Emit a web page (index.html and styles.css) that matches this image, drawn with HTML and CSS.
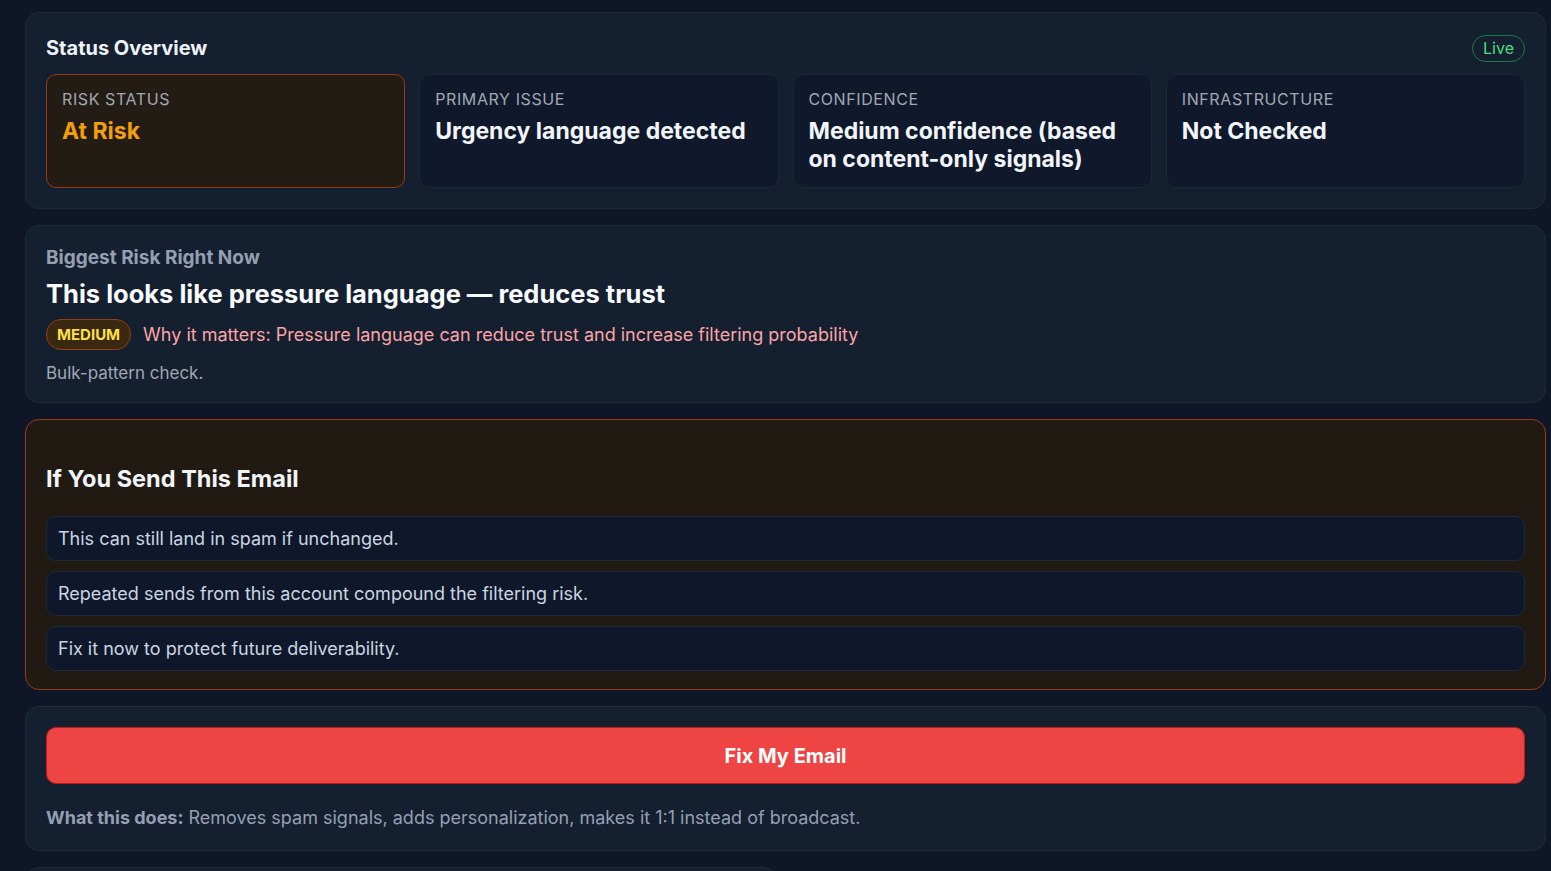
FILE: index.html
```html
<!doctype html>
<html>
<head>
    <title>Email check - result</title>
    <meta http-equiv="Content-Type" content="text/html; charset=utf-8" />
    <link rel="stylesheet" href="styles.css">
</head>
<body>
<div class="page">

<div class="card">
    <div class="card-head">
        <h2>Status Overview</h2>
        <span class="live">Live</span>
    </div>
    <div class="stats">
        <div class="stat stat-risk">
            <div class="stat-label">Risk Status</div>
            <div class="stat-value">At Risk</div>
        </div>
        <div class="stat">
            <div class="stat-label">Primary Issue</div>
            <div class="stat-value">Urgency language detected</div>
        </div>
        <div class="stat">
            <div class="stat-label">Confidence</div>
            <div class="stat-value">Medium confidence (based on content-only signals)</div>
        </div>
        <div class="stat">
            <div class="stat-label">Infrastructure</div>
            <div class="stat-value">Not Checked</div>
        </div>
    </div>
</div>

<div class="card card-risk">
    <div class="kicker">Biggest Risk Right Now</div>
    <h1>This looks like pressure language — reduces trust</h1>
    <div class="why">
        <span class="badge">MEDIUM</span>
        <span>Why it matters: Pressure language can reduce trust and increase filtering probability</span>
    </div>
    <div class="note">Bulk-pattern check.</div>
</div>

<div class="card card-warn">
    <h3>If You Send This Email</h3>
    <ul class="outcomes">
        <li>This can still land in spam if unchanged.</li>
        <li>Repeated sends from this account compound the filtering risk.</li>
        <li>Fix it now to protect future deliverability.</li>
    </ul>
</div>

<div class="card">
    <button class="fix">Fix My Email</button>
    <p class="does"><b>What this does:</b> Removes spam signals, adds personalization, makes it 1:1 instead of broadcast.</p>
</div>

<div class="bottom">
    <div class="card card-small"></div>
</div>

</div>
</body>
</html>
```

FILE: styles.css
```css
html, body    { margin:0; background-color:#0f1628; }
body          { font-family:Inter, "Noto Sans", sans-serif; color:#f1f5f9; }
.page         { padding:12px 5px 0 25px; display:flex; flex-direction:column; gap:16px; }

.card         { background-color:#141f30; border:1px solid #1f2b3d; border-radius:14px; padding:20px; }
.card-head    { display:flex; justify-content:space-between; align-items:center; height:30px; }
h2            { margin:0; font-size:20px; font-weight:700; color:#eef2f7; }
.live         { border:1px solid #15803d; color:#4ade80; border-radius:14px; padding:3px 10px; font-size:16px; line-height:19px; }

.stats        { display:grid; grid-template-columns:repeat(4, 1fr); gap:14px; margin-top:11px; }
.stat         { background-color:#0f192b; border:1px solid #1c2839; border-radius:10px; padding:14px 15px; min-height:84px; }
.stat-label   { font-size:16px; line-height:20px; text-transform:uppercase; letter-spacing:0.6px; color:#a1a8b3; }
.stat-value   { margin-top:8px; font-size:23px; line-height:28px; font-weight:700; color:#f1f5f9; }
.stat-risk    { background-color:#231c14; border-color:#9a3a12; }
.stat-risk .stat-value { color:#f59e0b; }

.card-risk    { padding:20px 20px 18px 20px; }
.kicker       { font-size:19px; line-height:24px; font-weight:700; color:#94a0b2; }
h1            { margin:8px 0 0 0; font-size:25.5px; line-height:32px; font-weight:700; color:#f8fafc; }
.why          { display:flex; align-items:center; gap:12px; margin-top:9px; font-size:18px; color:#fca5a5; }
.badge        { background-color:#3a2811; border:1px solid #92400e; color:#fde047; font-weight:700; font-size:15px; border-radius:15px; padding:0 10px; line-height:29px; }
.note         { margin-top:12px; font-size:17px; line-height:22px; color:#a1a8b3; }

.card-warn    { background-color:#201a13; border-color:#9a3a12; padding:20px 20px 18px 20px; }
h3            { margin:24px 0 0 0; font-size:23.5px; line-height:30px; font-weight:700; color:#f1f5f9; }
.outcomes     { list-style:none; margin:22px 0 0 0; padding:0; display:flex; flex-direction:column; gap:10px; }
.outcomes li  { background-color:#0f182a; border:1px solid #1e2a3c; border-radius:10px; padding:10px 11px; font-size:18px; line-height:23px; color:#cbd5e1; }

.fix          { display:block; width:100%; height:57px; background-color:#ef4444; border:1px solid #b91c1c; border-radius:10px; color:white; font-family:inherit; font-size:20px; font-weight:700; }
.does         { margin:22px 0 0 0; font-size:18px; line-height:24px; color:#94a0b2; }
.does b       { color:#94a0b2; }

.bottom       { display:grid; grid-template-columns:1fr 1fr; gap:16px; }
.card-small   { height:60px; }
```
